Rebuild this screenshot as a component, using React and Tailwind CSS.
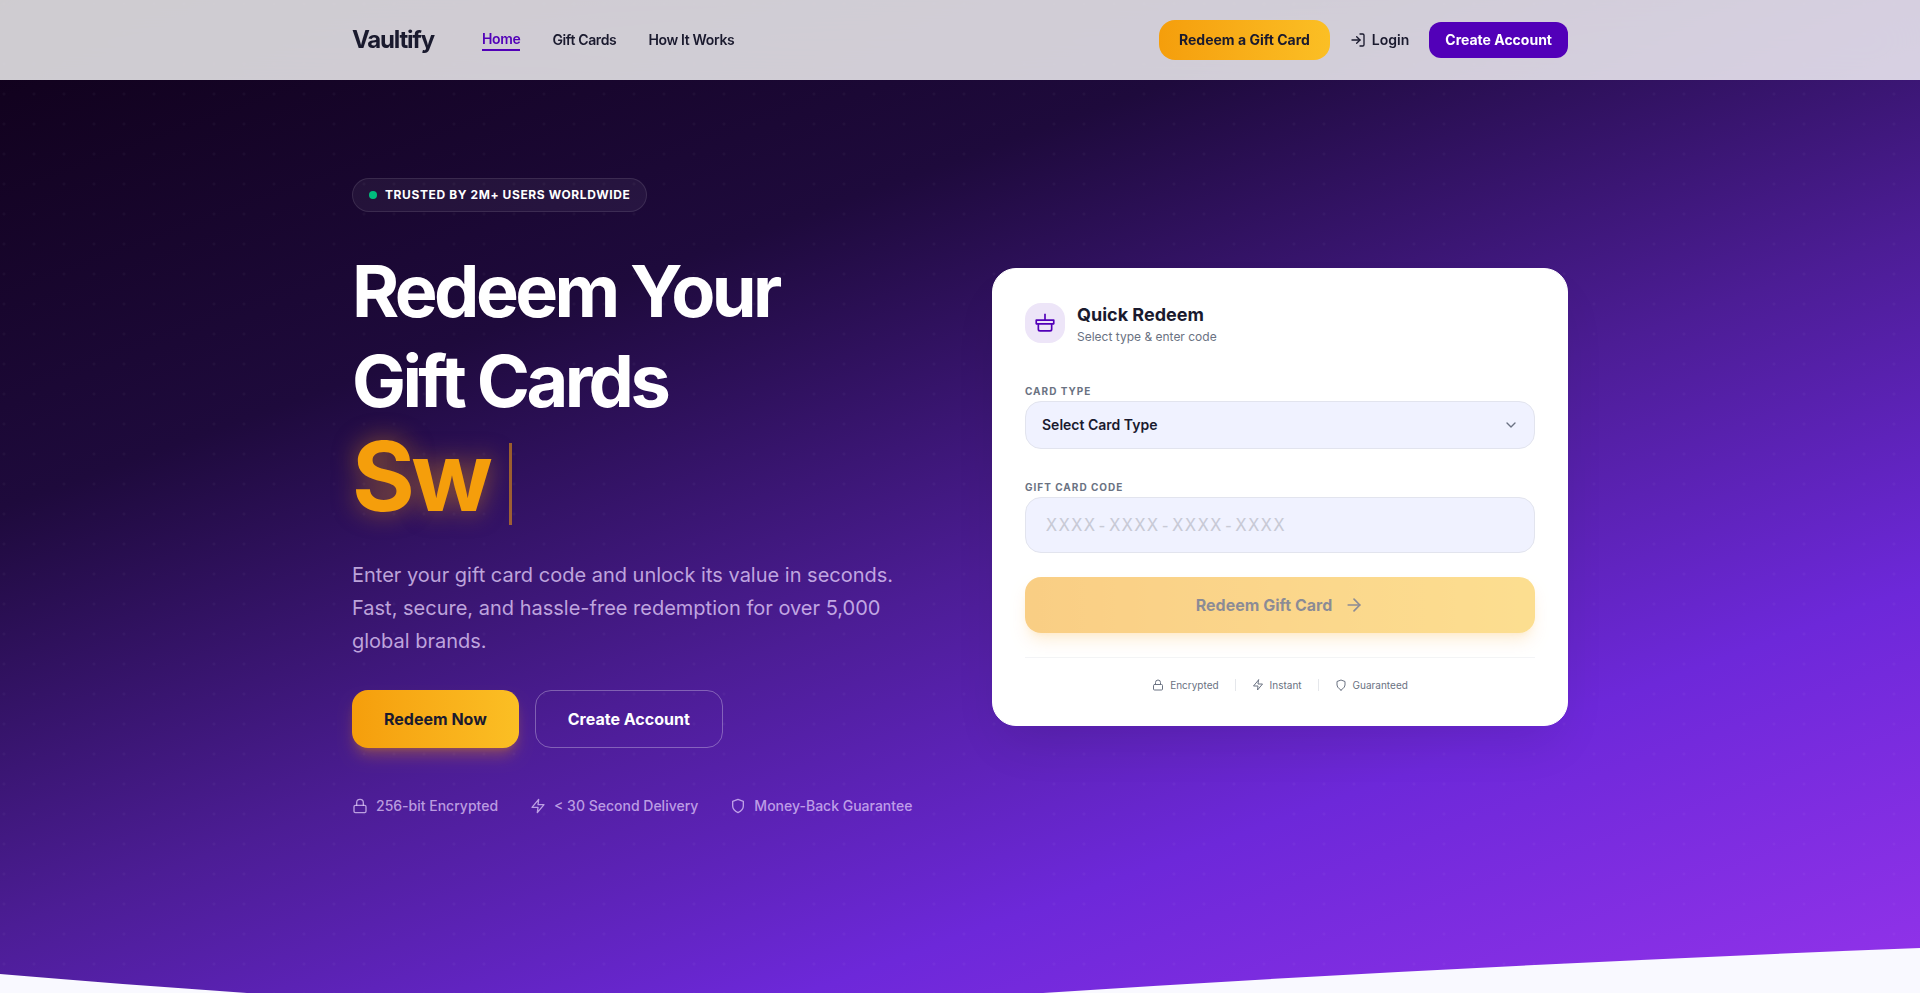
import { ArrowRight, ChevronDown, Lock, LogIn } from "lucide-react";

const NAV = ["Home", "Gift Cards", "How It Works"];

function ZapIcon({ className }) {
  return (
    <svg className={className} viewBox="0 0 24 24" fill="none" stroke="currentColor" strokeWidth="2" strokeLinecap="round" strokeLinejoin="round">
      <path d="M13 2 3 14h9l-1 8 10-12h-9l1-8z" />
    </svg>
  );
}

function ShieldIcon({ className }) {
  return (
    <svg className={className} viewBox="0 0 24 24" fill="none" stroke="currentColor" strokeWidth="2" strokeLinecap="round" strokeLinejoin="round">
      <path d="M12 22s8-4 8-10V5l-8-3-8 3v7c0 6 8 10 8 10z" />
    </svg>
  );
}

function GiftIcon() {
  return (
    <svg className="size-5" viewBox="0 0 24 24" fill="none" stroke="currentColor" strokeWidth="2" strokeLinejoin="round">
      <path d="M1.5 8.5h21v4.5h-21z" />
      <path d="M4 13v6.5a2 2 0 0 0 2 2h12a2 2 0 0 0 2-2V13" />
      <path d="M12 1v7.5" />
    </svg>
  );
}

const TRUST = [
  { icon: Lock, label: "256-bit Encrypted" },
  { icon: ZapIcon, label: "< 30 Second Delivery" },
  { icon: ShieldIcon, label: "Money-Back Guarantee" },
];

const CARD_TRUST = [
  { icon: Lock, label: "Encrypted" },
  { icon: ZapIcon, label: "Instant" },
  { icon: ShieldIcon, label: "Guaranteed" },
];

function Header() {
  return (
    <header className="fixed inset-x-0 top-0 z-50 bg-white/80 backdrop-blur-xl">
      <div className="mx-auto flex h-20 max-w-7xl items-center justify-between px-8">
        <div className="flex items-center gap-12">
          <a href="#" className="text-2xl font-bold tracking-tighter text-[#1a1a2e]">Vaultify</a>
          <nav className="flex items-center gap-8 text-sm font-semibold tracking-tight">
            {NAV.map((item, i) => (
              <a
                key={item}
                href="#"
                className={i === 0 ? "border-b-2 border-[#5200b8] text-[#5200b8]" : "text-[#1a1a2e]"}
              >
                {item}
              </a>
            ))}
          </nav>
        </div>
        <div className="flex items-center gap-5 text-sm font-bold text-[#1a1a2e]">
          <button className="h-10 rounded-2xl bg-linear-to-r from-[#f59e0b] to-[#fbbf24] px-5">Redeem a Gift Card</button>
          <a href="#" className="flex items-center gap-1.5 font-semibold">
            <LogIn className="size-4" />
            Login
          </a>
          <button className="h-9 rounded-xl bg-[#5200b8] px-4 text-white">Create Account</button>
        </div>
      </div>
    </header>
  );
}

function RedeemCard() {
  return (
    <form className="rounded-3xl border border-white bg-white p-8 shadow-2xl shadow-black/10">
      <div className="mb-8 flex items-center gap-3">
        <div className="flex size-10 items-center justify-center rounded-2xl bg-[#ede5f8] text-[#5200b8]">
          <GiftIcon />
        </div>
        <div>
          <h2 className="text-lg leading-7 font-bold text-[#1a1a2e]">Quick Redeem</h2>
          <p className="text-xs text-gray-500">Select type &amp; enter code</p>
        </div>
      </div>

      <div className="mb-6">
        <label htmlFor="type" className="flex h-6 items-end text-[10px] leading-5 font-bold tracking-widest text-gray-500">
          CARD TYPE
        </label>
        <div className="relative">
          <select
            id="type"
            className="h-12 w-full appearance-none rounded-2xl border border-[#e2e4ee] bg-[#f0f2ff] px-4 text-sm font-semibold text-[#1a1a2e]"
          >
            <option>Select Card Type</option>
          </select>
          <ChevronDown className="pointer-events-none absolute top-4 right-4 size-4 text-gray-500" />
        </div>
      </div>

      <div className="mb-6">
        <label htmlFor="code" className="flex h-6 items-end text-[10px] leading-5 font-bold tracking-widest text-gray-500">
          GIFT CARD CODE
        </label>
        <input
          id="code"
          type="text"
          placeholder="XXXX-XXXX-XXXX-XXXX"
          className="h-14 w-full rounded-2xl border border-[#e2e4ee] bg-[#f0f2ff] px-5 font-['DejaVu_Sans_Mono',monospace] text-lg tracking-widest text-[#1a1a2e] placeholder:text-[#c8cad6]"
        />
      </div>

      <button
        type="button"
        disabled
        className="flex h-14 w-full items-center justify-center gap-3 rounded-2xl bg-linear-to-r from-[#f59e0b] to-[#fbbf24] font-bold text-[#1a1a2e] opacity-50 shadow-lg shadow-amber-500/30"
      >
        Redeem Gift Card
        <ArrowRight className="size-5" />
      </button>

      <div className="mt-6 flex items-center justify-center gap-4 border-t border-gray-100 pt-5 text-[10px] leading-[15px] text-gray-500">
        {CARD_TRUST.map(({ icon: Icon, label }, i) => (
          <div key={label} className="flex items-center gap-4">
            {i > 0 && <span className="h-3 w-px bg-gray-200" />}
            <span className="flex items-center gap-1.5">
              <Icon className="size-3" />
              {label}
            </span>
          </div>
        ))}
      </div>
    </form>
  );
}

export default function App() {
  return (
    <div className="bg-[#f9f9ff] font-[Inter,sans-serif]">
      <Header />
      <section className="relative flex min-h-screen items-center overflow-hidden bg-[linear-gradient(160deg,#0f0018_0%,#1e0a3c_30%,#4c1d95_55%,#6d28d9_76%,#9333ea_100%)]">
        <div className="absolute inset-0 bg-[radial-gradient(circle_at_4px_4px,rgba(255,255,255,0.03)_1px,transparent_2px)] bg-size-[30px_30px]" />

        <div className="relative mx-auto grid w-full max-w-7xl grid-cols-2 items-center gap-16 px-8">
          <div>
            <div className="mb-[34px] inline-flex h-[34px] items-center gap-2 rounded-full border border-white/10 bg-white/5 px-4 text-xs font-bold tracking-wider text-white">
              <span className="size-2 rounded-full bg-emerald-500" />
              TRUSTED BY 2M+ USERS WORLDWIDE
            </div>
            <h1 className="text-7xl leading-[90px] font-bold tracking-tighter text-white">
              Redeem Your
              <br />
              Gift Cards
              <span className="flex h-[100px] items-center gap-5 text-8xl text-[#f59e0b]">
                <span className="[text-shadow:0_0_24px_rgba(245,158,11,0.5)]">Sw</span>
                <span className="mt-4 h-[82px] w-[3px] bg-[#f59e0b]/55" />
              </span>
            </h1>
            <p className="mt-[33px] text-xl leading-[33px] text-[#e9d5ff]/75">
              Enter your gift card code and unlock its value in seconds. Fast, secure, and hassle-free redemption for
              over 5,000 global brands.
            </p>
            <div className="mt-8 flex gap-4 font-bold">
              <button className="h-[58px] rounded-2xl bg-linear-to-r from-[#f59e0b] to-[#fbbf24] px-8 text-[#1a1a2e] shadow-lg shadow-amber-500/30">
                Redeem Now
              </button>
              <button className="h-[58px] rounded-2xl border border-white/30 px-8 text-white">Create Account</button>
            </div>
            <div className="mt-12 flex gap-8 text-sm font-medium text-[#e9d5ff]/70">
              {TRUST.map(({ icon: Icon, label }) => (
                <span key={label} className="flex items-center gap-2">
                  <Icon className="size-4" />
                  {label}
                </span>
              ))}
            </div>
          </div>
          <RedeemCard />
        </div>

        <svg
          className="absolute inset-x-0 bottom-0 h-[60px] w-full text-[#f9f9ff]"
          viewBox="0 0 1920 60"
          preserveAspectRatio="none"
          fill="currentColor"
        >
          <path d="M0 41C80 48 165 54 247 60H0Z" />
          <path d="M1043 60C1335 41 1628 26.5 1920 15V60Z" />
        </svg>
      </section>
    </div>
  );
}
